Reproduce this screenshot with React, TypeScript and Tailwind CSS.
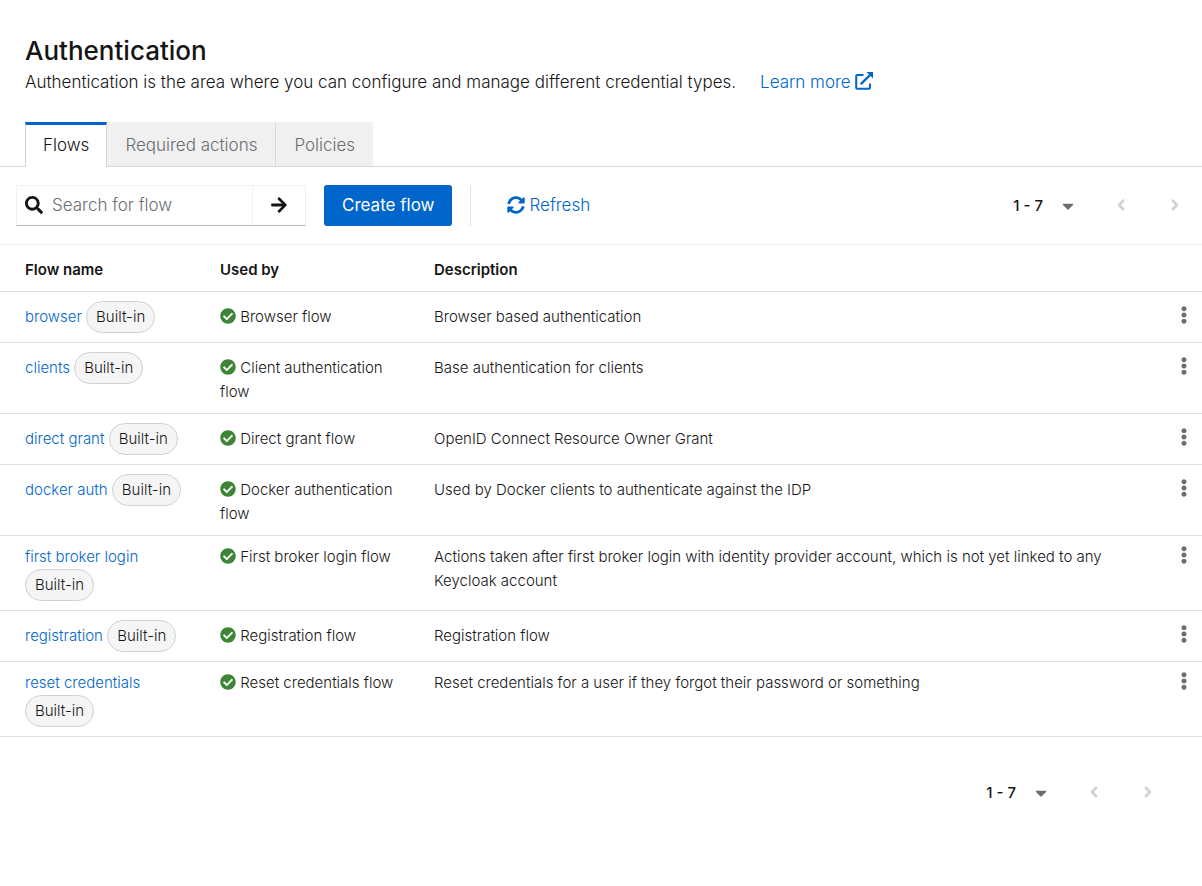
import React, { useState } from 'react'
import {
  FaAngleLeft,
  FaAngleRight,
  FaArrowRight,
  FaCaretDown,
  FaCheckCircle,
  FaEllipsisV,
  FaSearch,
  FaSyncAlt,
} from 'react-icons/fa'

interface Flow {
  alias: string
  usedBy: string
  description: string
}

const flows: Flow[] = [
  { alias: 'browser', usedBy: 'Browser flow', description: 'Browser based authentication' },
  { alias: 'clients', usedBy: 'Client authentication flow', description: 'Base authentication for clients' },
  { alias: 'direct grant', usedBy: 'Direct grant flow', description: 'OpenID Connect Resource Owner Grant' },
  { alias: 'docker auth', usedBy: 'Docker authentication flow', description: 'Used by Docker clients to authenticate against the IDP' },
  {
    alias: 'first broker login',
    usedBy: 'First broker login flow',
    description:
      'Actions taken after first broker login with identity provider account, which is not yet linked to any Keycloak account',
  },
  { alias: 'registration', usedBy: 'Registration flow', description: 'Registration flow' },
  {
    alias: 'reset credentials',
    usedBy: 'Reset credentials flow',
    description: 'Reset credentials for a user if they forgot their password or something',
  },
]

const tabs = ['Flows', 'Required actions', 'Policies']

function ExternalLinkIcon() {
  return (
    <svg viewBox="0 0 18 18" className="inline-block size-[18px] ml-1 align-[-2px]" fill="none" aria-hidden="true">
      <path d="M8.5 3H2.2Q1.2 3 1.2 4v11.8q0 1 1 1H14q1 0 1-1V11.5" stroke="currentColor" strokeWidth="2" />
      <path d="M5.8 12.2L15 3" stroke="currentColor" strokeWidth="2.4" />
      <path d="M11.5 0H18v6.5z" fill="currentColor" />
    </svg>
  )
}

function Pagination() {
  return (
    <div className="flex items-center">
      <button type="button" aria-haspopup="menu" className="flex h-10 items-center gap-4 px-2 text-[15px] font-medium">
        1 - 7
        <FaCaretDown className="size-[18px] text-[#6a6e73]" />
      </button>
      <button type="button" disabled aria-label="Previous page" className="ml-[9px] flex h-10 w-[54px] items-center justify-center pb-[2px] text-[#d2d2d2]">
        <FaAngleLeft className="size-[18px]" />
      </button>
      <button type="button" disabled aria-label="Next page" className="flex h-10 w-[54px] items-center justify-center pb-[2px] text-[#d2d2d2]">
        <FaAngleRight className="size-[18px]" />
      </button>
    </div>
  )
}

export default function App() {
  const [activeTab, setActiveTab] = useState('Flows')
  const [search, setSearch] = useState('')

  const visible = flows.filter((flow) => flow.alias.includes(search.toLowerCase()))

  return (
    <main className="min-h-screen bg-white font-['Inter','Liberation_Sans',sans-serif] text-[15px] leading-6 font-light text-[#151515]">
      <header className="px-[25px] pt-9">
        <h1 className="text-[26px] leading-[30px] font-medium">Authentication</h1>
        <p className="mt-1 text-[17px] leading-6">
          Authentication is the area where you can configure and manage different credential types.
          <a href="#learn-more" className="ml-6 text-[#0066cc]">
            Learn more
            <ExternalLinkIcon />
          </a>
        </p>
      </header>

      <div role="tablist" className="mt-7 flex border-b border-[#d8d8d8] px-[25px] text-[17px]">
        {tabs.map((tab) => (
          <button
            key={tab}
            type="button"
            role="tab"
            aria-selected={tab === activeTab}
            onClick={() => setActiveTab(tab)}
            className={
              tab === activeTab
                ? '-mb-px h-[45px] border-x border-t-[3px] border-x-[#d2d2d2] border-t-[#0066cc] bg-white px-[17px] pb-[2px]'
                : 'h-11 border-r border-[#d8d8d8] bg-[#f0f0f0] px-[18px] pt-[2px] text-[#6a6e73] last:border-r-0'
            }
          >
            {tab}
          </button>
        ))}
      </div>

      <div className="flex items-center border-b border-[#f0f0f0] py-[18px] pl-4 text-[17px]">
        <form className="flex h-[41px] border border-[#f0f0f0] border-b-[#b8bbbe]" onSubmit={(e) => e.preventDefault()}>
          <label className="flex w-[235px] items-center gap-[9px] pb-[2px] pl-2">
            <FaSearch className="size-[18px] shrink-0" />
            <input
              type="text"
              aria-label="Search for flow"
              placeholder="Search for flow"
              value={search}
              onChange={(e) => setSearch(e.target.value)}
              className="w-full min-w-0 outline-none placeholder:text-[#6a6e73]"
            />
          </label>
          <button type="submit" aria-label="Search" className="flex w-[53px] items-center justify-center border-l border-[#f0f0f0] pb-[2px]">
            <FaArrowRight className="size-[18px]" />
          </button>
        </form>
        <button type="button" className="ml-[18px] h-[41px] rounded-[3px] bg-[#0066cc] px-[18px] pb-px font-normal text-white">
          Create flow
        </button>
        <div className="ml-[18px] h-[41px] border-l border-[#e0e0e0]" />
        <button type="button" className="ml-9 flex h-[41px] items-center gap-1 pb-px text-[#0066cc]">
          <FaSyncAlt className="size-[18px]" />
          Refresh
        </button>
        <div className="ml-auto">
          <Pagination />
        </div>
      </div>

      <table className="w-full table-fixed text-left">
        <thead>
          <tr className="border-b border-[#e0e0e0]">
            <th scope="col" className="w-[211px] pt-[13px] pr-[9px] pb-[9px] pl-[25px] font-semibold">Flow name</th>
            <th scope="col" className="w-[214px] px-[9px] pt-[13px] pb-[9px] font-semibold">Used by</th>
            <th scope="col" className="px-[9px] pt-[13px] pb-[9px] font-semibold">Description</th>
            <th scope="col" className="w-14" aria-label="Actions" />
          </tr>
        </thead>
        <tbody>
          {visible.map((flow) => (
            <tr key={flow.alias} className="border-b border-[#e0e0e0] align-baseline">
              <td className="py-[9px] pr-[9px] pl-[25px]">
                <a href={`#${flow.alias}`} className="text-[#0066cc]">{flow.alias}</a>{' '}
                <span className="inline-block rounded-full border border-[#d2d2d2] bg-[#f5f5f5] px-[9px] py-[3px]">Built-in</span>
              </td>
              <td className="p-[9px]">
                <FaCheckCircle className="inline size-4 align-[-2px] text-[#3e8635]" /> {flow.usedBy}
              </td>
              <td className="p-[9px]">{flow.description}</td>
              <td className="text-right">
                <button type="button" aria-label={`Actions for ${flow.alias}`} className="px-[9px] text-[#6a6e73]">
                  <FaEllipsisV className="inline size-[18px] align-[-2px]" />
                </button>
              </td>
            </tr>
          ))}
        </tbody>
      </table>

      <div className="flex justify-end pt-9 pr-[27px]">
        <Pagination />
      </div>
    </main>
  )
}
